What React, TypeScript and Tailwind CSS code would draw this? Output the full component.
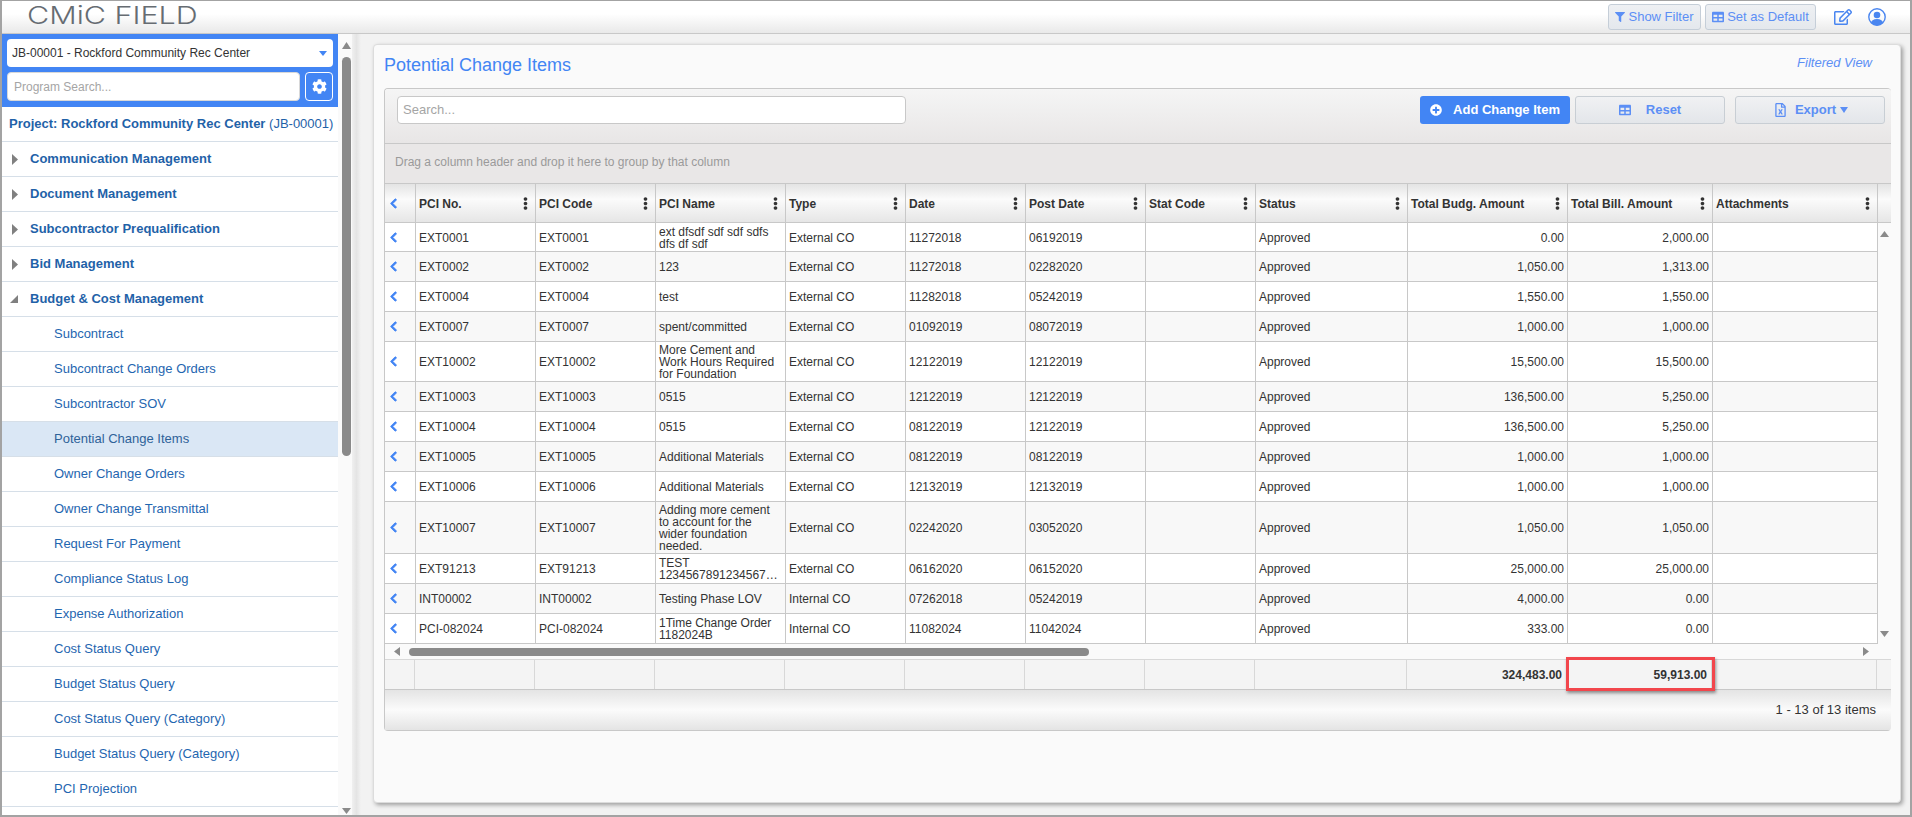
import { FaChevronLeft, FaCog, FaEllipsisV, FaFilter, FaPlusCircle, FaRegEdit, FaRegFileExcel, FaTable } from "react-icons/fa"

const gridCols = "grid grid-cols-[31px_120px_120px_130px_120px_120px_120px_110px_152px_160px_145px_165px]"
const footerCols = "grid grid-cols-[30px_120px_120px_130px_120px_120px_120px_110px_152px_160px_145px_165px]"

const navTop = ["Communication Management", "Document Management", "Subcontractor Prequalification", "Bid Management"]

const navSub = [
  "Subcontract",
  "Subcontract Change Orders",
  "Subcontractor SOV",
  "Potential Change Items",
  "Owner Change Orders",
  "Owner Change Transmittal",
  "Request For Payment",
  "Compliance Status Log",
  "Expense Authorization",
  "Cost Status Query",
  "Budget Status Query",
  "Cost Status Query (Category)",
  "Budget Status Query (Category)",
  "PCI Projection",
]

const columns = [
  "PCI No.",
  "PCI Code",
  "PCI Name",
  "Type",
  "Date",
  "Post Date",
  "Stat Code",
  "Status",
  "Total Budg. Amount",
  "Total Bill. Amount",
  "Attachments",
]

const rows = [
  ["EXT0001", "EXT0001", "ext dfsdf sdf sdf sdfs dfs df sdf", "External CO", "11272018", "06192019", "0.00", "2,000.00", "h-[29px]"],
  ["EXT0002", "EXT0002", "123", "External CO", "11272018", "02282020", "1,050.00", "1,313.00", "h-[30px]"],
  ["EXT0004", "EXT0004", "test", "External CO", "11282018", "05242019", "1,550.00", "1,550.00", "h-[30px]"],
  ["EXT0007", "EXT0007", "spent/committed", "External CO", "01092019", "08072019", "1,000.00", "1,000.00", "h-[30px]"],
  ["EXT10002", "EXT10002", "More Cement and Work Hours Required for Foundation", "External CO", "12122019", "12122019", "15,500.00", "15,500.00", "h-[40px]"],
  ["EXT10003", "EXT10003", "0515", "External CO", "12122019", "12122019", "136,500.00", "5,250.00", "h-[30px]"],
  ["EXT10004", "EXT10004", "0515", "External CO", "08122019", "12122019", "136,500.00", "5,250.00", "h-[30px]"],
  ["EXT10005", "EXT10005", "Additional Materials", "External CO", "08122019", "08122019", "1,000.00", "1,000.00", "h-[30px]"],
  ["EXT10006", "EXT10006", "Additional Materials", "External CO", "12132019", "12132019", "1,000.00", "1,000.00", "h-[30px]"],
  ["EXT10007", "EXT10007", "Adding more cement to account for the wider foundation needed.", "External CO", "02242020", "03052020", "1,050.00", "1,050.00", "h-[52px]"],
  ["EXT91213", "EXT91213", "TEST 1234567891234567…", "External CO", "06162020", "06152020", "25,000.00", "25,000.00", "h-[30px]"],
  ["INT00002", "INT00002", "Testing Phase LOV", "Internal CO", "07262018", "05242019", "4,000.00", "0.00", "h-[30px]"],
  ["PCI-082024", "PCI-082024", "1Time Change Order 1182024B", "Internal CO", "11082024", "11042024", "333.00", "0.00", "h-[30px]"],
]

function Caret({ dir, className }: { dir: "up" | "down" | "left" | "right" | "open"; className: string }) {
  const points = {
    up: "0,8 5,0 10,8",
    down: "0,0 10,0 5,8",
    left: "8,0 8,10 0,5",
    right: "0,0 0,10 8,5",
    open: "10,0 10,8 0,8",
  }[dir]
  const box = dir === "up" || dir === "down" || dir === "open" ? "0 0 10 8" : "0 0 8 10"
  return (
    <svg viewBox={box} preserveAspectRatio="none" className={className} fill="currentColor">
      <polygon points={points} />
    </svg>
  )
}

function UserIcon() {
  return (
    <svg viewBox="0 0 18 18" className="h-[18px] w-[18px] text-[#4a86f0]">
      <defs>
        <clipPath id="user-clip">
          <circle cx="9" cy="9" r="8.5" />
        </clipPath>
      </defs>
      <circle cx="9" cy="9" r="8.2" fill="none" stroke="currentColor" strokeWidth="1.4" />
      <circle cx="9" cy="7" r="3.3" fill="currentColor" />
      <ellipse cx="9" cy="15.5" rx="6.2" ry="4.5" fill="currentColor" clipPath="url(#user-clip)" />
    </svg>
  )
}

export default function App() {
  return (
    <div className="h-[817px] w-[1912px] overflow-hidden border-x-2 border-t border-b-2 border-[#a3a3a3] bg-[#f2f2f2] font-['Liberation_Sans',Arial,sans-serif]">
      {/* Top bar */}
      <div className="flex h-[33px] items-center border-b border-[#c8c8c8] bg-gradient-to-b from-white from-40% to-[#e9e9e9]">
        <div className="ml-[25px] mb-[3px] origin-left scale-x-[1.27] font-['Inter',sans-serif] text-[24px] font-light leading-none text-[#666c72]">CMiC FIELD</div>
        <div className="ml-auto flex items-center">
          <button className="flex h-[26px] w-[93px] items-center justify-center gap-[3px] rounded-[3px] border border-[#c5ced8] bg-gradient-to-b from-[#eef0f3] to-[#e4e8ed] text-[13px] text-[#5c8ff5]">
            <FaFilter className="h-[10px] w-[10px]" />
            Show Filter
          </button>
          <button className="ml-[4px] flex h-[26px] w-[111px] items-center justify-center gap-[3px] rounded-[3px] border border-[#c5ced8] bg-gradient-to-b from-[#eef0f3] to-[#e4e8ed] text-[13px] text-[#5c8ff5]">
            <FaTable className="h-[12px] w-[12px]" />
            Set as Default
          </button>
          <FaRegEdit className="ml-[18px] h-[16px] w-[18px] text-[#4a86f0]" />
          <div className="ml-[16px] mr-[24px]">
            <UserIcon />
          </div>
        </div>
      </div>

      <div className="flex h-[781px]">
        {/* Sidebar */}
        <div className="h-full w-[336px] shrink-0 overflow-hidden bg-white">
          <div className="flex flex-col gap-[5px] bg-[#4285f4] p-[5px] pb-[6px]">
            <div className="flex h-[28px] items-center justify-between rounded-[4px] bg-white px-[5px] text-[12px] text-[#333]">
              JB-00001 - Rockford Community Rec Center
              <Caret dir="down" className="mr-[1px] h-[5px] w-[8px] text-[#4285f4]" />
            </div>
            <div className="flex gap-[5px]">
              <div className="flex h-[29px] flex-1 items-center rounded-[4px] border border-[#d8d8d8] bg-white px-[6px] text-[12px] text-[#a5a5a5]">Program Search...</div>
              <button className="flex h-[29px] w-[28px] items-center justify-center rounded-[4px] border border-white bg-[#4285f4] text-white">
                <FaCog className="h-[15px] w-[15px]" />
              </button>
            </div>
          </div>
          <div className="flex h-[35px] items-center whitespace-nowrap border-b border-[#d6dfe8] pl-[7px] text-[13px] font-bold text-[#1f62a8]">
            Project: Rockford Community Rec Center&nbsp;<span className="font-normal">(JB-00001)</span>
          </div>
          {navTop.map((item) => (
            <div key={item} className="flex h-[35px] items-center border-b border-[#d6dfe8] text-[13px] font-bold text-[#1f62a8]">
              <Caret dir="right" className="ml-[10px] mr-[12px] h-[11px] w-[6px] text-[#808080]" />
              {item}
            </div>
          ))}
          <div className="flex h-[35px] items-center border-b border-[#d6dfe8] text-[13px] font-bold text-[#1f62a8]">
            <Caret dir="open" className="ml-[8px] mr-[12px] h-[8px] w-[8px] text-[#808080]" />
            Budget &amp; Cost Management
          </div>
          {navSub.map((item) => (
            <div key={item} className={`flex h-[35px] items-center border-b border-[#d6dfe8] pl-[52px] text-[13px] ${item === "Potential Change Items" ? "bg-[#dae7f5] text-[#2f6299]" : "text-[#1f66b0]"}`}>
              {item}
            </div>
          ))}
        </div>

        {/* Sidebar scrollbar and gutter */}
        <div className="flex h-full w-[14px] shrink-0 flex-col items-center bg-[#fafafa] pl-[2px]">
          <Caret dir="up" className="mt-[8px] h-[7px] w-[9px] text-[#8a8a8a]" />
          <div className="mt-[8px] h-[399px] w-[9px] rounded-full bg-[#8a8a8a]" />
          <Caret dir="down" className="mt-auto mb-[1px] h-[6px] w-[9px] text-[#8a8a8a]" />
        </div>
        <div className="h-full w-[9px] shrink-0 bg-gradient-to-r from-[#f0f0f0] via-[#e4e4e4] to-[#f2f2f2]" />

        {/* Main */}
        <div className="min-w-0 flex-1 pl-[12px] pr-[9px] pt-[10px]">
          <div className="relative h-[759px] rounded-[4px] border border-[#dcdcdc] bg-[#fafafa] px-[10px] pt-[10px] shadow-[2px_2px_4px_rgba(0,0,0,0.35)]">
            <div className="flex h-[33px] items-start justify-between">
              <div className="text-[18px] leading-[20px] text-[#4285f4]">Potential Change Items</div>
              <div className="mr-[18px] text-[13px] italic leading-[15px] text-[#5c8ff5]">Filtered View</div>
            </div>

            {/* Grid */}
            <div className="relative mr-[-1px] overflow-hidden rounded-[4px] border-l border-t border-[#c8c8c8]">
              <div className="flex h-[55px] items-start justify-between border-b border-[#c8c8c8] bg-gradient-to-b from-[#f5f5f5] to-[#e8e6e6] pt-[7px]">
                <div className="ml-[12px] flex h-[28px] w-[509px] items-center rounded-[4px] border border-[#c8c8c8] bg-white px-[5px] text-[13px] text-[#a5a5a5]">Search...</div>
                <div className="mr-[6px] flex">
                  <button className="flex h-[28px] w-[150px] items-center justify-center gap-[11px] rounded-[3px] bg-[#4285f4] text-[13px] font-bold text-white">
                    <FaPlusCircle className="h-[12px] w-[12px]" />
                    Add Change Item
                  </button>
                  <button className="ml-[5px] flex h-[28px] w-[150px] items-center justify-center gap-[15px] rounded-[3px] border border-[#c8ced4] bg-gradient-to-b from-[#f0f1f3] to-[#e3e6ea] text-[13px] font-bold text-[#5c8ff5]">
                    <FaTable className="h-[12px] w-[12px]" />
                    Reset
                  </button>
                  <button className="ml-[10px] flex h-[28px] w-[150px] items-center justify-center gap-[9px] rounded-[3px] border border-[#c8ced4] bg-gradient-to-b from-[#f0f1f3] to-[#e3e6ea] pl-[3px] text-[13px] font-bold text-[#5c8ff5]">
                    <FaRegFileExcel className="h-[14px] w-[11px]" />
                    <span className="flex items-center gap-[4px]">
                      Export
                      <Caret dir="down" className="h-[6px] w-[8px]" />
                    </span>
                  </button>
                </div>
              </div>
              <div className="flex h-[40px] items-center border-b border-[#c8c8c8] bg-[#e9e7e7] pb-[4px] pl-[10px] text-[12px] text-[#9a9a9a]">
                Drag a column header and drop it here to group by that column
              </div>

              {/* Column headers */}
              <div className={`${gridCols} h-[39px] border-b border-[#c8c8c8] bg-gradient-to-b from-[#e4e4e4] via-[#fbfbfb] via-40% to-[#e6e6e6]`}>
                <div className="flex items-center border-r border-[#c8c8c8] pl-[5px] pt-[1px] text-[#4285f4]">
                  <FaChevronLeft className="h-[11px] w-[7px]" strokeWidth={40} />
                </div>
                {columns.map((col) => (
                  <div key={col} className="flex items-center justify-between border-r border-[#c8c8c8] pl-[3px] pr-[7px] pt-[1px] text-[12px] font-bold text-[#333]">
                    {col}
                    <FaEllipsisV className="h-[13px] w-[5px] text-[#333]" />
                  </div>
                ))}
              </div>

              {/* Rows */}
              <div className="flex">
                <div className="w-[1493px] shrink-0">
                  {rows.map((row, i) => (
                    <div key={row[0]} className={`${gridCols} ${row[8]} border-b border-[#c8c8c8] text-[12px] leading-[12px] text-[#333] ${i % 2 === 1 ? "bg-[#f8f8f8]" : "bg-white"}`}>
                      <div className="flex items-center border-r border-[#c8c8c8] pl-[5px] text-[#4285f4]">
                        <FaChevronLeft className="h-[11px] w-[7px]" strokeWidth={40} />
                      </div>
                      <div className="flex items-center border-r border-[#c8c8c8] px-[3px] pt-[1px]">{row[0]}</div>
                      <div className="flex items-center border-r border-[#c8c8c8] px-[3px] pt-[1px]">{row[1]}</div>
                      <div className="flex items-center border-r border-[#c8c8c8] px-[3px] pt-[1px]">{row[2]}</div>
                      <div className="flex items-center border-r border-[#c8c8c8] px-[3px] pt-[1px]">{row[3]}</div>
                      <div className="flex items-center border-r border-[#c8c8c8] px-[3px] pt-[1px]">{row[4]}</div>
                      <div className="flex items-center border-r border-[#c8c8c8] px-[3px] pt-[1px]">{row[5]}</div>
                      <div className="border-r border-[#c8c8c8]" />
                      <div className="flex items-center border-r border-[#c8c8c8] px-[3px] pt-[1px]">Approved</div>
                      <div className="flex items-center justify-end border-r border-[#c8c8c8] px-[3px] pt-[1px]">{row[6]}</div>
                      <div className="flex items-center justify-end border-r border-[#c8c8c8] px-[3px] pt-[1px]">{row[7]}</div>
                      <div className="border-r border-[#c8c8c8]" />
                    </div>
                  ))}
                </div>
                <div className="flex flex-1 flex-col items-center">
                  <Caret dir="up" className="mt-[8px] h-[6px] w-[9px] text-[#8a8a8a]" />
                  <Caret dir="down" className="mt-auto mb-[7px] h-[6px] w-[9px] text-[#8a8a8a]" />
                </div>
              </div>

              {/* Horizontal scrollbar */}
              <div className="flex h-[16px] items-center border-b border-[#d8d8d8] bg-[#fafafa] pl-[9px]">
                <Caret dir="left" className="h-[9px] w-[6px] text-[#8a8a8a]" />
                <div className="ml-[9px] h-[8px] w-[680px] rounded-full bg-[#8a8a8a]" />
                <Caret dir="right" className="ml-[774px] h-[9px] w-[6px] text-[#8a8a8a]" />
              </div>

              {/* Totals */}
              <div className={`${footerCols} h-[30px] border-b border-[#c8c8c8] bg-[#f4f4f4] text-[12px] font-bold text-[#333]`}>
                <div className="border-r border-[#d8d8d8]" />
                <div className="border-r border-[#d8d8d8]" />
                <div className="border-r border-[#d8d8d8]" />
                <div className="border-r border-[#d8d8d8]" />
                <div className="border-r border-[#d8d8d8]" />
                <div className="border-r border-[#d8d8d8]" />
                <div className="border-r border-[#d8d8d8]" />
                <div className="border-r border-[#d8d8d8]" />
                <div className="border-r border-[#d8d8d8]" />
                <div className="flex items-center justify-end border-r border-[#d8d8d8] px-[4px]">324,483.00</div>
                <div className="flex items-center justify-end border-r border-[#d8d8d8] px-[4px]">59,913.00</div>
                <div className="border-r border-[#d8d8d8]" />
              </div>

              {/* Pager */}
              <div className="flex h-[41px] items-center justify-end border-b border-[#c8c8c8] bg-gradient-to-b from-[#e4e4e4] via-[#fbfbfb] via-50% to-[#e4e4e4] pr-[15px] text-[13px] text-[#333]">
                1 - 13 of 13 items
              </div>
            </div>

            {/* Annotation box over the bill total */}
            <div className="absolute left-[1192px] top-[612px] h-[34px] w-[149px] border-[3px] border-[#f2464c] shadow-[1px_2px_3px_rgba(0,0,0,0.4)]" />
          </div>
        </div>
      </div>
    </div>
  )
}
